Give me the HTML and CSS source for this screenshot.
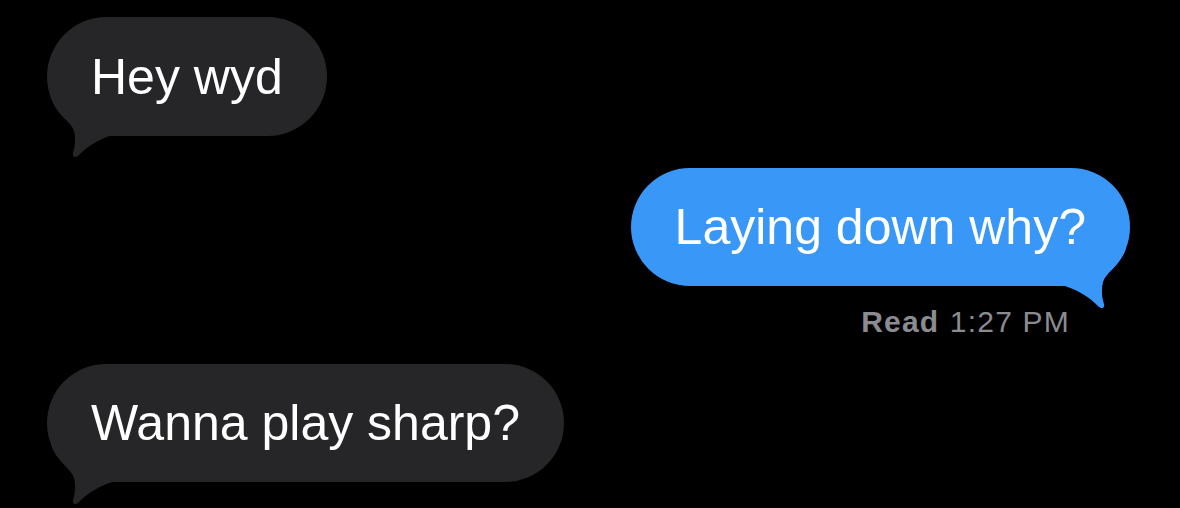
FILE: index.html
```html
<!DOCTYPE html>
<html>
<head>
<meta charset="utf-8">
<link rel="stylesheet" href="styles.css">
</head>
<body>
<div class="thread">
  <div class="row row-in first">
    <div class="bubble in">Hey wyd
      <svg class="tail tail-in" width="100" height="150" viewBox="0 0 100 150"><path d="M 4 80 C 8 96, 24 104, 27 114 C 29 122, 28 130, 26 136 C 25 140, 28 141, 31 139 C 40 130, 48 124, 65 118 L 60 100 Z"/></svg>
    </div>
  </div>
  <div class="row row-out">
    <div class="bubble out">Laying down why?
      <svg class="tail tail-out" width="100" height="150" viewBox="0 0 100 150"><path d="M 96 80 C 92 96, 76 104, 73 114 C 71 122, 72 130, 74 136 C 75 140, 72 141, 69 139 C 60 130, 52 124, 35 118 L 40 100 Z"/></svg>
    </div>
  </div>
  <div class="receipt"><b>Read</b> 1:27 PM</div>
  <div class="row row-in last">
    <div class="bubble in">Wanna play sharp?
      <svg class="tail tail-in" width="100" height="150" viewBox="0 0 100 150"><path d="M 4 80 C 8 96, 24 104, 27 114 C 29 122, 28 130, 26 136 C 25 140, 28 141, 31 139 C 40 130, 48 124, 65 118 L 60 100 Z"/></svg>
    </div>
  </div>
</div>
</body>
</html>
```
FILE: styles.css
```css
html, body {
  margin: 0;
  padding: 0;
  background: #000;
  height: 100%;
  overflow: hidden;
}
.thread {
  display: flex;
  flex-direction: column;
  padding: 17px 50px 0 47px;
  font-family: "Liberation Sans", Arial, sans-serif;
}
.row {
  display: flex;
}
.row-in { justify-content: flex-start; }
.row-out { justify-content: flex-end; margin-top: 32px; }
.row.last { margin-top: 25px; }
.bubble {
  position: relative;
  box-sizing: border-box;
  height: 119px;
  line-height: 119px;
  padding: 1px 44px 0;
  border-radius: 60px;
  font-size: 50px;
  color: #fff;
  white-space: nowrap;
}
.bubble.out { height: 118px; line-height: 117px; }
.row.last .bubble { height: 118px; line-height: 117px; }
.in { background: #262628; }
.out { background: #3897f7; }
.tail {
  position: absolute;
  top: 0;
  overflow: visible;
}
.tail-in { left: 0; fill: #262628; }
.tail-out { right: 0; fill: #3897f7; }
.receipt {
  align-self: flex-end;
  margin: 19px 60px 0 0;
  font-size: 30px;
  line-height: 34px;
  letter-spacing: 1.2px;
  color: #8b8b90;
  white-space: nowrap;
}
.receipt b {
  font-weight: 700;
  margin-right: 1px;
}
```
